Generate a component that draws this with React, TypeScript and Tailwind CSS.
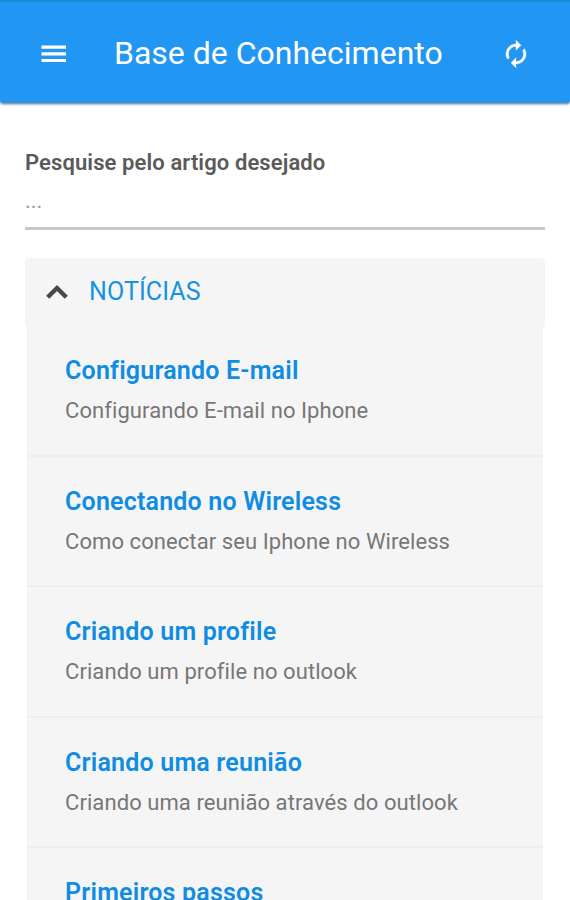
const articles = [
  { title: "Configurando E-mail", text: "Configurando E-mail no Iphone" },
  { title: "Conectando no Wireless", text: "Como conectar seu Iphone no Wireless" },
  { title: "Criando um profile", text: "Criando um profile no outlook" },
  { title: "Criando uma reunião", text: "Criando uma reunião através do outlook" },
  { title: "Primeiros passos", text: "" },
];

function Header() {
  return (
    <header className="flex h-[103px] shrink-0 items-center rounded-b-[3px] border-t-2 border-[#168bd8] bg-[#2196f3] pt-0.5 pr-[38px] pl-[38px] text-white shadow-[0_1px_3px_rgba(0,0,0,0.6)]">
      <svg className="size-8 shrink-0" viewBox="0 0 32 32" fill="currentColor">
        <path d="M3.5 7.5h24.5v3.2H3.5zM3.5 14.2h24.5v3.2H3.5zM3.5 20.9h24.5v3.2H3.5z" />
      </svg>
      <h1 className="mb-0.5 ml-11 flex-1 text-[32px] leading-10 whitespace-nowrap">Base de Conhecimento</h1>
      <svg className="size-8 shrink-0" viewBox="0 0 24 24" fill="currentColor" stroke="currentColor" strokeWidth="0.3">
        <g transform="translate(12 12) scale(0.94) translate(-12 -12)">
          <path d="M12 6v3l4-4-4-4v3c-4.42 0-8 3.58-8 8 0 1.57.46 3.03 1.24 4.26L6.7 14.8c-.45-.83-.7-1.79-.7-2.8 0-3.31 2.69-6 6-6zm6.76 1.74L17.3 9.2c.44.84.7 1.79.7 2.8 0 3.31-2.69 6-6 6v-3l-4 4 4 4v-3c4.42 0 8-3.58 8-8 0-1.57-.46-3.03-1.24-4.26z" />
        </g>
      </svg>
    </header>
  );
}

export default function App() {
  return (
    <div className="flex h-[900px] w-[570px] flex-col overflow-hidden bg-white font-['Roboto',sans-serif]">
      <Header />
      <main className="px-[25px] pt-[45px]">
        <label className="block text-[22px] leading-[30px] font-semibold tracking-[0.1px] text-[#5a5a5a]">Pesquise pelo artigo desejado</label>
        <div className="h-[52px] border-b-[3px] border-[#c8c8c8] pt-[9px] text-[22px] leading-[28px] text-[#999]">...</div>
        <section className="mt-[28px]">
          <div className="flex h-[68px] items-center rounded-t bg-[#f5f5f5] pl-4">
            <svg className="size-8" viewBox="0 0 32 32" fill="none" stroke="#484848" strokeWidth="4.4">
              <path d="M6.7 21.3L16 12l9.3 9.3" />
            </svg>
            <h2 className="ml-4 text-[25px] leading-8 tracking-[0.1px] text-[#1593e0]">NOTÍCIAS</h2>
          </div>
          <ul className="mx-[2px] bg-[#f5f5f5]">
            {articles.map((a) => (
              <li key={a.title} className="h-[130.5px] border-b-2 border-[#eeeeee] pt-[29px] pl-[38px] whitespace-nowrap">
                <h3 className="text-[25px] leading-8 font-semibold tracking-[0.2px] text-[#108ce2]">{a.title}</h3>
                {a.text && <p className="mt-2 text-[22px] leading-8 tracking-[0.08px] text-[#777]">{a.text}</p>}
              </li>
            ))}
          </ul>
        </section>
      </main>
    </div>
  );
}
